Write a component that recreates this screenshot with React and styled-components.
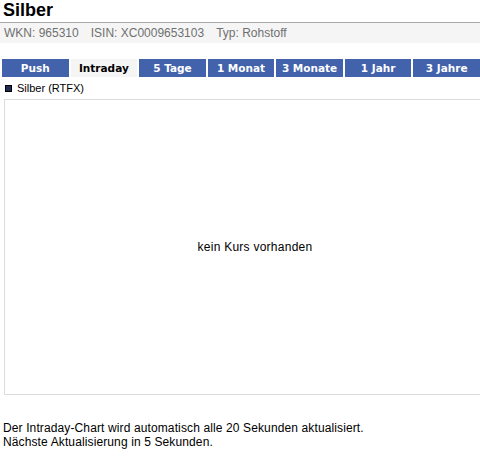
import React from "react";
import styled, { createGlobalStyle } from "styled-components";

const GlobalStyle = createGlobalStyle`
  html, body {
    margin: 0;
    padding: 0;
    background: #fff;
    overflow: hidden;
  }
  body {
    font-family: "Liberation Sans", Arial, sans-serif;
    color: #000;
  }
`;

const tabs = ["Push", "Intraday", "5 Tage", "1 Monat", "3 Monate", "1 Jahr", "3 Jahre"];

function App() {
  return (
    <Page>
      <GlobalStyle />
      <Title>Silber</Title>
      <InfoBar>
        <InfoItem>WKN: 965310</InfoItem>
        <InfoItem>ISIN: XC0009653103</InfoItem>
        <InfoItem>Typ: Rohstoff</InfoItem>
      </InfoBar>
      <TabRow>
        {tabs.map((t) => (
          <Tab key={t} $active={t === "Intraday"}>
            {t}
          </Tab>
        ))}
      </TabRow>
      <Legend>
        <LegendSwatch />
        <span>Silber (RTFX)</span>
      </Legend>
      <ChartBox>
        <Empty>kein Kurs vorhanden</Empty>
      </ChartBox>
      <Footer>
        Der Intraday-Chart wird automatisch alle 20 Sekunden aktualisiert.
        <br />
        Nächste Aktualisierung in 5 Sekunden.
      </Footer>
    </Page>
  );
}

export default App;

const Page = styled.div`
  width: 480px;
  overflow: hidden;
`;

const Title = styled.h1`
  margin: 0;
  padding: 0 0 0 3px;
  height: 22px;
  font-size: 18px;
  line-height: 20px;
  font-weight: bold;
`;

const InfoBar = styled.div`
  display: flex;
  height: 20px;
  border-top: 1px solid #a9a9a9;
  background: #f5f5f5;
  padding-left: 4px;
  font-size: 12px;
  line-height: 20px;
  color: #707070;
`;

const InfoItem = styled.span`
  margin-right: 12px;
`;

const TabRow = styled.div`
  display: grid;
  grid-template-columns: repeat(7, 1fr);
  column-gap: 2px;
  padding-left: 2px;
  margin-top: 16px;
  height: 18px;
`;

const Tab = styled.div`
  display: flex;
  align-items: center;
  justify-content: center;
  background: ${(p) => (p.$active ? "#f5f5f5" : "#4262ac")};
  color: ${(p) => (p.$active ? "#000" : "#fff")};
  font-family: "DejaVu Sans", Verdana, sans-serif;
  font-weight: bold;
  font-size: 10.5px;
  white-space: nowrap;
`;

const Legend = styled.div`
  display: flex;
  align-items: center;
  height: 22px;
  padding-left: 5px;
  font-size: 11px;
  color: #000;
`;

const LegendSwatch = styled.span`
  width: 5px;
  height: 5px;
  border: 1px solid #000;
  background: #1f2b57;
  margin-right: 5px;
`;

const ChartBox = styled.div`
  display: flex;
  align-items: center;
  justify-content: center;
  margin-left: 4px;
  width: 500px;
  height: 294px;
  border: 1px solid #dcdcdc;
`;

const Empty = styled.span`
  font-size: 12px;
  letter-spacing: 0.25px;
`;

const Footer = styled.div`
  margin-top: 26px;
  padding-left: 3px;
  font-size: 12px;
  line-height: 14px;
  letter-spacing: 0.12px;
`;
